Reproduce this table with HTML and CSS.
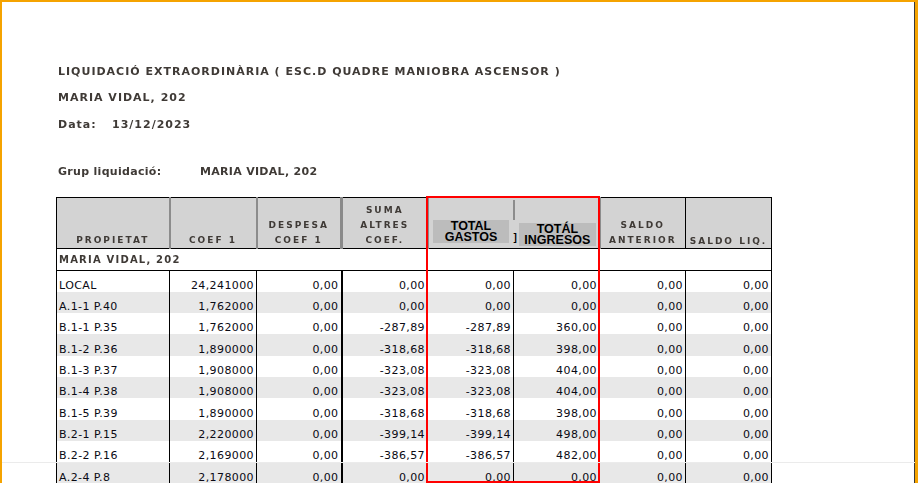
FILE: index.html
```html
<!DOCTYPE html>
<html lang="ca">
<head>
<meta charset="utf-8">
<title>Liquidació extraordinària</title>
<link rel="stylesheet" href="styles.css">
</head>
<body>
<div class="frame">
  <div class="content">
    <p class="line l-title blur">LIQUIDACIÓ EXTRAORDINÀRIA ( ESC.D QUADRE MANIOBRA ASCENSOR )</p>
    <p class="line l-name blur">MARIA VIDAL, 202</p>
    <p class="line l-date blur"><span class="date-label">Data:</span><span>13/12/2023</span></p>
    <p class="line l-grup blur"><span class="grup-label">Grup liquidació:</span><span>MARIA VIDAL, 202</span></p>

    <div class="table-wrap">
      <table class="liq">
        <colgroup>
          <col class="c1"><col class="c2"><col class="c3"><col class="c4">
          <col class="c5"><col class="c6"><col class="c7"><col class="c8">
        </colgroup>
        <thead>
          <tr class="head">
            <th class="h-first"><span class="blur">PROPIETAT</span></th>
            <th class="h-sep"><span class="blur">COEF 1</span></th>
            <th class="h-sep"><span class="blur">DESPESA<br>COEF 1</span></th>
            <th class="h-sep h-thick"><span class="blur">SUMA<br>ALTRES<br>COEF.</span></th>
            <th class="h-gastos"><span class="tbox tbox-g">TOTAL<br>GASTOS</span></th>
            <th class="h-ingresos"><span class="h-part"></span><span class="bracket">]</span><span class="tbox tbox-i">TOTÁL<br>INGRESOS</span></th>
            <th class="h-sep"><span class="blur">SALDO<br>ANTERIOR</span></th>
            <th class="h-liq"><span class="blur">SALDO LIQ.</span></th>
          </tr>
        </thead>
        <tbody>
          <tr class="group"><td colspan="8"><span class="blur">MARIA VIDAL, 202</span></td></tr>
          <tr><td>LOCAL</td><td>24,241000</td><td>0,00</td><td>0,00</td><td>0,00</td><td>0,00</td><td>0,00</td><td>0,00</td></tr>
          <tr class="alt"><td>A.1-1 P.40</td><td>1,762000</td><td>0,00</td><td>0,00</td><td>0,00</td><td>0,00</td><td>0,00</td><td>0,00</td></tr>
          <tr><td>B.1-1 P.35</td><td>1,762000</td><td>0,00</td><td>-287,89</td><td>-287,89</td><td>360,00</td><td>0,00</td><td>0,00</td></tr>
          <tr class="alt"><td>B.1-2 P.36</td><td>1,890000</td><td>0,00</td><td>-318,68</td><td>-318,68</td><td>398,00</td><td>0,00</td><td>0,00</td></tr>
          <tr><td>B.1-3 P.37</td><td>1,908000</td><td>0,00</td><td>-323,08</td><td>-323,08</td><td>404,00</td><td>0,00</td><td>0,00</td></tr>
          <tr class="alt"><td>B.1-4 P.38</td><td>1,908000</td><td>0,00</td><td>-323,08</td><td>-323,08</td><td>404,00</td><td>0,00</td><td>0,00</td></tr>
          <tr><td>B.1-5 P.39</td><td>1,890000</td><td>0,00</td><td>-318,68</td><td>-318,68</td><td>398,00</td><td>0,00</td><td>0,00</td></tr>
          <tr class="alt"><td>B.2-1 P.15</td><td>2,220000</td><td>0,00</td><td>-399,14</td><td>-399,14</td><td>498,00</td><td>0,00</td><td>0,00</td></tr>
          <tr><td>B.2-2 P.16</td><td>2,169000</td><td>0,00</td><td>-386,57</td><td>-386,57</td><td>482,00</td><td>0,00</td><td>0,00</td></tr>
          <tr class="alt"><td>A.2-4 P.8</td><td>2,178000</td><td>0,00</td><td>0,00</td><td>0,00</td><td>0,00</td><td>0,00</td><td>0,00</td></tr>
        </tbody>
      </table>
      <div class="highlight"></div>
    </div>
  </div>
  <div class="seam"></div>
</div>
</body>
</html>
```

FILE: styles.css
```css
html, body {
  margin: 0;
  padding: 0;
  background: #fff;
}

body {
  font-family: "DejaVu Sans", Verdana, sans-serif;
  color: #000;
}

.frame {
  position: relative;
  box-sizing: border-box;
  width: 918px;
  height: 483px;
  overflow: hidden;
  border-top: 2px solid #f5a300;
  border-left: 2px solid #f5a300;
  border-right: 3px solid #f5a300;
  box-shadow: inset -1px 0 0 #3a3a3a;
}

.content {
  padding: 62px 0 0 54px;
}

.blur {
  filter: blur(0.45px);
  color: #3f3a36;
}

.line {
  margin: 0;
  padding-left: 2px;
  height: 16px;
  line-height: 16px;
  font-size: 11px;
  font-weight: bold;
  letter-spacing: 1px;
  white-space: nowrap;
}

.l-name { margin-top: 10px; }
.l-date { margin-top: 11px; }
.l-grup { margin-top: 31px; letter-spacing: 0.3px; }

.date-label {
  display: inline-block;
  width: 54px;
}

.grup-label {
  display: inline-block;
  width: 142px;
}

.table-wrap {
  position: relative;
  margin-top: 17px;
  width: 715px;
}

.liq {
  border-collapse: collapse;
  table-layout: fixed;
  width: 715px;
  font-size: 11px;
}

.c1 { width: 113px; }
.c2 { width: 87px; }
.c3 { width: 85px; }
.c4 { width: 86px; }
.c5 { width: 86px; }
.c6 { width: 86px; }
.c7 { width: 86px; }
.c8 { width: 86px; }

.head {
  height: 51px;
}

.head th {
  padding: 0;
  background: #d3d3d3;
  border-top: 1px solid #000;
  border-bottom: 1px solid #000;
  vertical-align: bottom;
  text-align: center;
  font-size: 9px;
  font-weight: bold;
  line-height: 15px;
  letter-spacing: 2px;
  white-space: nowrap;
}

.head .h-first { border-left: 1px solid #000; }
.head .h-sep { border-left: 2px solid #8c8c8c; }
.head .h-thick { border-left: 3px solid #8a8a8a; }
.head .h-gastos { border-left: 2px solid #8c8c8c; padding-bottom: 5px; }
.head .h-ingresos {
  position: relative;
  text-align: right;
  padding-right: 3px;
  padding-bottom: 2px;
}
.head .h-liq {
  border-left: 1px solid #000;
  border-right: 1px solid #000;
  line-height: 14px;
}

.h-part {
  position: absolute;
  left: -1px;
  top: 2px;
  width: 2px;
  height: 20px;
  background: #8c8c8c;
}

.bracket {
  font-family: "Liberation Sans", Arial, sans-serif;
  font-size: 10px;
  line-height: 10px;
  letter-spacing: 0;
  margin-right: 2px;
  color: #000;
}

.tbox {
  display: inline-block;
  vertical-align: bottom;
  width: 77px;
  height: 23px;
  padding-top: 1px;
  box-sizing: border-box;
  background: #bcbcbc;
  font-family: "Liberation Sans", Arial, sans-serif;
  font-size: 12.5px;
  line-height: 11px;
  letter-spacing: 0;
  color: #000;
  text-align: center;
}

.tbox-g { width: 76px; }

.group td {
  height: 21px;
  padding: 0 0 0 2px;
  border-left: 1px solid #000;
  border-right: 1px solid #000;
  border-bottom: 1px solid #000;
  font-size: 10px;
  font-weight: bold;
  letter-spacing: 1.2px;
  text-align: left;
  white-space: nowrap;
}

tbody tr:not(.group) {
  height: 21.33px;
}

tbody tr.alt {
  background: #e8e8e8;
}

tbody tr:not(.group) td {
  padding: 0 2px 0 0;
  text-align: right;
  vertical-align: bottom;
  border-right: 1px solid #000;
  line-height: 13px;
  letter-spacing: 0.4px;
  white-space: nowrap;
  color: #0a0a14;
}

tbody tr:not(.group) td:first-child {
  text-align: left;
  padding: 0 0 0 2px;
  border-left: 1px solid #000;
}

tbody tr:not(.group) td:nth-child(3) {
  border-right: 2px solid #000;
}

.highlight {
  position: absolute;
  left: 370px;
  top: -1px;
  width: 174px;
  height: 287px;
  box-sizing: border-box;
  border: 2px solid #f00;
  pointer-events: none;
}

.seam {
  position: absolute;
  left: 0;
  right: 0;
  top: 460px;
  height: 1px;
  background: #ebebeb;
}
```
